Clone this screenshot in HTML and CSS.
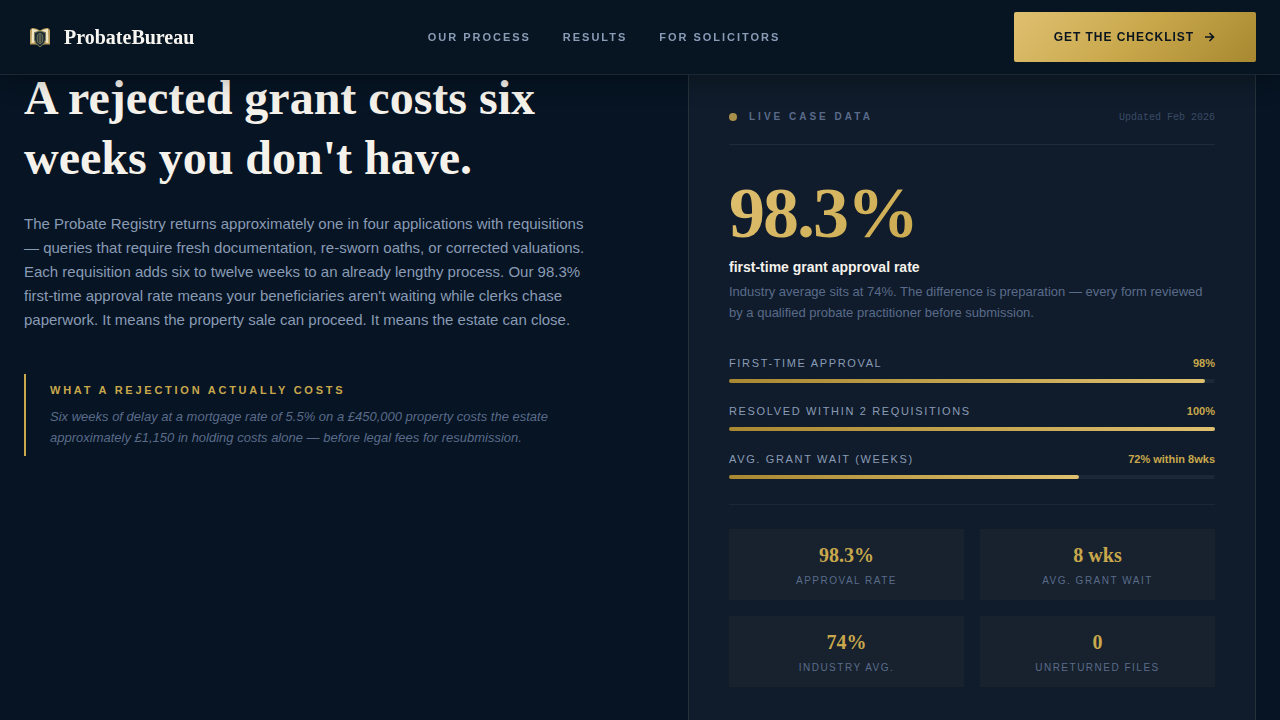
FILE: index.html
```html
<!DOCTYPE html>
<html lang="en">
<head>
  <meta charset="UTF-8" />
  <meta name="viewport" content="width=device-width, initial-scale=1.0" />
  <title>ProbateBureau</title>
  <link rel="stylesheet" href="styles.css">
</head>
<body>

  <header class="site-header">
    <a class="brand" href="#">
      <svg class="brand-logo" viewBox="0 0 32 32" aria-hidden="true">
        <path d="M6 9 L8 7 Q12 6.5 16 9.5 Q20 6.5 24 7 L26 9 V23.5 H21 L16 24.5 L11 23.5 H6 Z" fill="#b99c57" />
        <path d="M8 8 Q12 7.5 15.5 10.5 L10.5 12 V21.5 L7.5 22 Z M24 8 Q20 7.5 16.5 10.5 L21.5 12 V21.5 L24.5 22 Z" fill="#f1e6c4" />
        <path d="M16 10 L21.5 11.5 V18.5 Q21 23 16 26 Q11 23 10.5 18.5 V11.5 Z" fill="#1b2c38" stroke="#77785a" stroke-width="1" />
        <ellipse cx="16" cy="17.5" rx="2.8" ry="5" fill="#2f3f42" stroke="#7d7a52" stroke-width="1" />
        <path d="M16 13.5 V21.5" stroke="#8b8656" stroke-width="1" />
      </svg>
      <span>ProbateBureau</span>
    </a>
    <nav class="nav">
      <a href="#process">Our Process</a>
      <a href="#results">Results</a>
      <a href="#solicitors">For Solicitors</a>
    </nav>
    <button class="cta" type="button">
      Get the Checklist
      <svg class="cta-arrow" viewBox="0 0 12 12" aria-hidden="true">
        <path d="M1 6 H9.5 M5.5 2 L9.5 6 L5.5 10" fill="none" stroke="currentColor" stroke-width="1.6" />
      </svg>
    </button>
  </header>

  <main class="results" id="results">
    <section class="intro">
      <h1>A rejected grant costs six weeks you don't have.</h1>
      <p class="lead">The Probate Registry returns approximately one in four applications with requisitions — queries that require fresh documentation, re-sworn oaths, or corrected valuations. Each requisition adds six to twelve weeks to an already lengthy process. Our 98.3% first-time approval rate means your beneficiaries aren't waiting while clerks chase paperwork. It means the property sale can proceed. It means the estate can close.</p>
      <aside class="callout">
        <h2>What a rejection actually costs</h2>
        <p>Six weeks of delay at a mortgage rate of 5.5% on a £450,000 property costs the estate approximately £1,150 in holding costs alone — before legal fees for resubmission.</p>
      </aside>
    </section>

    <section class="card">
      <div class="card-head">
        <span class="dot"></span>
        <h2>Live case data</h2>
        <span class="updated">Updated Feb 2026</span>
      </div>

      <div class="big-number">98.3%</div>
      <h3>first-time grant approval rate</h3>
      <p class="card-note">Industry average sits at 74%. The difference is preparation — every form reviewed by a qualified probate practitioner before submission.</p>

      <div class="bars">
        <div class="bar-row">
          <div class="bar-label"><span>First-time approval</span><strong>98%</strong></div>
          <div class="track"><div class="fill" style="width: 98%"></div></div>
        </div>
        <div class="bar-row">
          <div class="bar-label"><span>Resolved within 2 requisitions</span><strong>100%</strong></div>
          <div class="track"><div class="fill" style="width: 100%"></div></div>
        </div>
        <div class="bar-row">
          <div class="bar-label"><span>Avg. grant wait (weeks)</span><strong>72% within 8wks</strong></div>
          <div class="track"><div class="fill" style="width: 72%"></div></div>
        </div>
      </div>

      <div class="stats">
        <div class="stat"><strong>98.3%</strong><span>Approval rate</span></div>
        <div class="stat"><strong>8 wks</strong><span>Avg. grant wait</span></div>
        <div class="stat"><strong>74%</strong><span>Industry avg.</span></div>
        <div class="stat"><strong>0</strong><span>Unreturned files</span></div>
      </div>
    </section>
  </main>

</body>
</html>
```
FILE: styles.css
```css
* {
  box-sizing: border-box;
  margin: 0;
  padding: 0;
}

body {
  font-family: "Liberation Sans", Arial, sans-serif;
  background: #061423;
  color: #8a9bb5;
}

/* header */
.site-header {
  position: fixed;
  top: 0;
  left: 0;
  right: 0;
  z-index: 10;
  display: flex;
  align-items: center;
  justify-content: space-between;
  padding: 12px 24px;
  background: #071523;
  border-bottom: 1px solid #1b2832;
  box-shadow: 0 4px 24px rgba(0, 0, 0, 0.3);
}

.brand {
  display: flex;
  align-items: center;
  gap: 8px;
  font-family: "Liberation Serif", "Times New Roman", serif;
  font-size: 20px;
  font-weight: bold;
  color: #f8f6f1;
  text-decoration: none;
}

.brand-logo {
  width: 32px;
  height: 32px;
}

.nav {
  display: flex;
  gap: 32px;
}

.nav a {
  font-size: 11px;
  font-weight: bold;
  letter-spacing: 0.18em;
  text-transform: uppercase;
  text-decoration: none;
  color: #8a9bb5;
}

.cta {
  display: flex;
  align-items: center;
  gap: 10px;
  height: 50px;
  padding: 0 40px;
  border: 0;
  border-radius: 2px;
  background: linear-gradient(135deg, #dfc070 0%, #c9a84c 50%, #a88830 100%);
  color: #0a1520;
  font-family: inherit;
  font-size: 12px;
  font-weight: bold;
  letter-spacing: 0.08em;
  text-transform: uppercase;
}

.cta-arrow {
  width: 12px;
  height: 12px;
}

/* results section, runs under the header */
.results {
  display: grid;
  grid-template-columns: 1fr 1fr;
  gap: 96px;
  align-items: start;
  padding: 68px 24px 80px;
}

h1 {
  font-family: "Liberation Serif", "Times New Roman", serif;
  font-size: 48px;
  line-height: 60px;
  color: #f5f2ec;
  margin-bottom: 24px;
}

.lead {
  font-size: 15px;
  line-height: 24px;
  margin-bottom: 42px;
}

.callout {
  border-left: 2px solid #c9a84c;
  padding: 8px 24px;
}

.callout h2 {
  font-size: 11px;
  line-height: 16px;
  letter-spacing: 0.25em;
  text-transform: uppercase;
  color: #c9a84c;
  margin-bottom: 8px;
}

.callout p {
  font-size: 13px;
  line-height: 21px;
  font-style: italic;
  color: #5a6b8a;
}

/* data card */
.card {
  padding: 40px;
  background: #101c2b;
  border: 1px solid #25323a;
}

.card-head {
  display: flex;
  align-items: center;
  gap: 12px;
  padding-bottom: 19px;
  margin-bottom: 32px;
  border-bottom: 1px solid #1e2b38;
}

.dot {
  width: 8px;
  height: 8px;
  border-radius: 50%;
  background: #a8904a;
}

.card-head h2 {
  font-size: 10px;
  line-height: 16px;
  letter-spacing: 0.3em;
  text-transform: uppercase;
  color: #5a6b8a;
}

.updated {
  margin-left: auto;
  font-family: "Liberation Mono", "Courier New", monospace;
  font-size: 10px;
  color: #3a4a66;
}

.big-number {
  font-family: "Liberation Serif", "Times New Roman", serif;
  font-size: 72px;
  font-weight: bold;
  line-height: 72px;
  letter-spacing: -2px;
  background: linear-gradient(135deg, #dfc070 0%, #c9a84c 50%, #a88830 100%);
  -webkit-background-clip: text;
  background-clip: text;
  color: transparent;
  margin-bottom: 8px;
}

.card h3 {
  font-size: 14px;
  line-height: 20px;
  color: #f5f2ec;
  margin-bottom: 4px;
}

.card-note {
  font-size: 13px;
  line-height: 21px;
  color: #5a6b8a;
  margin-bottom: 32px;
}

.bars {
  display: grid;
  gap: 20px;
  padding-bottom: 25px;
  border-bottom: 1px solid #1a2734;
}

.bar-label {
  display: flex;
  justify-content: space-between;
  font-size: 11px;
  line-height: 16px;
  margin-bottom: 8px;
}

.bar-label span {
  letter-spacing: 0.15em;
  text-transform: uppercase;
}

.bar-label strong {
  color: #c9a84c;
}

.track {
  height: 4px;
  border-radius: 2px;
  background: #1b2836;
}

.fill {
  height: 100%;
  border-radius: 2px;
  background: linear-gradient(90deg, #a88830, #dfc070);
}

.stats {
  display: grid;
  grid-template-columns: 1fr 1fr;
  gap: 16px;
  padding-top: 24px;
}

.stat {
  display: flex;
  flex-direction: column;
  gap: 4px;
  padding: 12px;
  text-align: center;
  background: #17222e;
}

.stat strong {
  font-family: "Liberation Serif", "Times New Roman", serif;
  font-size: 20px;
  line-height: 29px;
  color: #c9a84c;
}

.stat span {
  font-size: 10px;
  line-height: 14px;
  letter-spacing: 0.15em;
  text-transform: uppercase;
  color: #5a6b8a;
}
```
